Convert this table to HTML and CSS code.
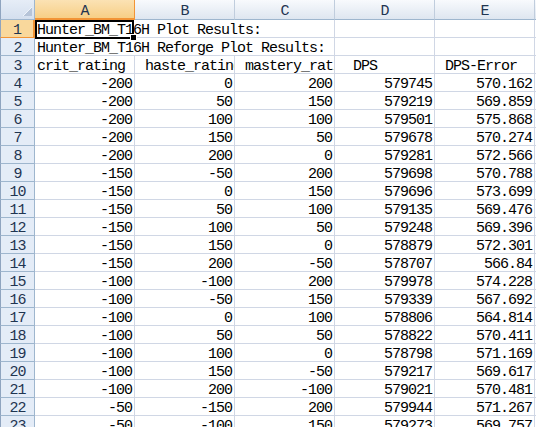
FILE: index.html
```html
<!DOCTYPE html>
<html>
<head>
<meta charset="utf-8">
<link rel="stylesheet" href="styles.css">
</head>
<body>
<div class="sheet">
  <div class="row hdr">
    <div class="corner"><svg width="34" height="19" viewBox="0 0 34 19"><polygon points="31,7 31,16 22,16" fill="#b6c4d8"/><polyline points="31,7 22,16" stroke="#eef3fa" stroke-width="1" fill="none"/></svg></div>
    <div class="ch sel">A</div><div class="ch">B</div><div class="ch">C</div><div class="ch">D</div><div class="ch">E</div><div class="ch"></div>
  </div>
  <div class="row"><div class="rh sel">1</div><div class="c span3">Hunter_BM_T16H Plot Results:</div><div class="c"></div><div class="c"></div><div class="c"></div></div>
  <div class="row"><div class="rh">2</div><div class="c span3">Hunter_BM_T16H Reforge Plot Results:</div><div class="c"></div><div class="c"></div><div class="c"></div></div>
  <div class="row"><div class="rh">3</div><div class="c">crit_rating</div><div class="c"> haste_rating</div><div class="c"> mastery_rating</div><div class="c">  DPS</div><div class="c"> DPS-Error</div><div class="c"></div></div>
  <div class="row"><div class="rh">4</div><div class="c n">-200</div><div class="c n">0</div><div class="c n">200</div><div class="c n">579745</div><div class="c n">570.162</div><div class="c"></div></div>
  <div class="row"><div class="rh">5</div><div class="c n">-200</div><div class="c n">50</div><div class="c n">150</div><div class="c n">579219</div><div class="c n">569.859</div><div class="c"></div></div>
  <div class="row"><div class="rh">6</div><div class="c n">-200</div><div class="c n">100</div><div class="c n">100</div><div class="c n">579501</div><div class="c n">575.868</div><div class="c"></div></div>
  <div class="row"><div class="rh">7</div><div class="c n">-200</div><div class="c n">150</div><div class="c n">50</div><div class="c n">579678</div><div class="c n">570.274</div><div class="c"></div></div>
  <div class="row"><div class="rh">8</div><div class="c n">-200</div><div class="c n">200</div><div class="c n">0</div><div class="c n">579281</div><div class="c n">572.566</div><div class="c"></div></div>
  <div class="row"><div class="rh">9</div><div class="c n">-150</div><div class="c n">-50</div><div class="c n">200</div><div class="c n">579698</div><div class="c n">570.788</div><div class="c"></div></div>
  <div class="row"><div class="rh">10</div><div class="c n">-150</div><div class="c n">0</div><div class="c n">150</div><div class="c n">579696</div><div class="c n">573.699</div><div class="c"></div></div>
  <div class="row"><div class="rh">11</div><div class="c n">-150</div><div class="c n">50</div><div class="c n">100</div><div class="c n">579135</div><div class="c n">569.476</div><div class="c"></div></div>
  <div class="row"><div class="rh">12</div><div class="c n">-150</div><div class="c n">100</div><div class="c n">50</div><div class="c n">579248</div><div class="c n">569.396</div><div class="c"></div></div>
  <div class="row"><div class="rh">13</div><div class="c n">-150</div><div class="c n">150</div><div class="c n">0</div><div class="c n">578879</div><div class="c n">572.301</div><div class="c"></div></div>
  <div class="row"><div class="rh">14</div><div class="c n">-150</div><div class="c n">200</div><div class="c n">-50</div><div class="c n">578707</div><div class="c n">566.84</div><div class="c"></div></div>
  <div class="row"><div class="rh">15</div><div class="c n">-100</div><div class="c n">-100</div><div class="c n">200</div><div class="c n">579978</div><div class="c n">574.228</div><div class="c"></div></div>
  <div class="row"><div class="rh">16</div><div class="c n">-100</div><div class="c n">-50</div><div class="c n">150</div><div class="c n">579339</div><div class="c n">567.692</div><div class="c"></div></div>
  <div class="row"><div class="rh">17</div><div class="c n">-100</div><div class="c n">0</div><div class="c n">100</div><div class="c n">578806</div><div class="c n">564.814</div><div class="c"></div></div>
  <div class="row"><div class="rh">18</div><div class="c n">-100</div><div class="c n">50</div><div class="c n">50</div><div class="c n">578822</div><div class="c n">570.411</div><div class="c"></div></div>
  <div class="row"><div class="rh">19</div><div class="c n">-100</div><div class="c n">100</div><div class="c n">0</div><div class="c n">578798</div><div class="c n">571.169</div><div class="c"></div></div>
  <div class="row"><div class="rh">20</div><div class="c n">-100</div><div class="c n">150</div><div class="c n">-50</div><div class="c n">579217</div><div class="c n">569.617</div><div class="c"></div></div>
  <div class="row"><div class="rh">21</div><div class="c n">-100</div><div class="c n">200</div><div class="c n">-100</div><div class="c n">579021</div><div class="c n">570.481</div><div class="c"></div></div>
  <div class="row"><div class="rh">22</div><div class="c n">-50</div><div class="c n">-150</div><div class="c n">200</div><div class="c n">579944</div><div class="c n">571.267</div><div class="c"></div></div>
  <div class="row"><div class="rh">23</div><div class="c n">-50</div><div class="c n">-100</div><div class="c n">150</div><div class="c n">579273</div><div class="c n">569.757</div><div class="c"></div></div>
  <div class="selbox"></div>
  <div class="handle"></div>
</div>
</body>
</html>
```
FILE: styles.css
```css
html, body {
  margin: 0;
  padding: 0;
  background: #fff;
  overflow: hidden;
}
.sheet {
  position: relative;
  width: 636px;
  font-family: "Liberation Mono", monospace;
  font-size: 15px;
  letter-spacing: -1px;
  color: #000;
}
.row {
  display: grid;
  grid-template-columns: 35px repeat(6, 100px);
  grid-template-rows: 18px;
}
.row.hdr {
  grid-template-rows: 20px;
}
.c {
  box-sizing: border-box;
  border-right: 1px solid #d0d7e5;
  border-bottom: 1px solid #d0d7e5;
  padding: 0 2px;
  line-height: 22px;
  white-space: pre;
  overflow: hidden;
}
.c.n {
  text-align: right;
}
.span3 {
  grid-column: span 3;
}
.rh {
  box-sizing: border-box;
  background: #e4ecf7;
  border-left: 1px solid #8fa4bf;
  border-right: 1px solid #9eb6ce;
  border-bottom: 1px solid #9eb6ce;
  text-align: center;
  color: #1f3551;
  line-height: 22px;
  overflow: hidden;
}
.rh.sel {
  background: #f9d89c;
  border-right: 2px solid #f29436;
  border-bottom: 1px solid #f29436;
}
.corner {
  box-sizing: border-box;
  background: linear-gradient(#e6edf7, #d4dfee);
  border-left: 1px solid #8fa4bf;
  border-right: 1px solid #9eb6ce;
  border-bottom: 1px solid #9eb6ce;
  overflow: hidden;
}
.corner svg {
  display: block;
}
.ch {
  box-sizing: border-box;
  background: linear-gradient(#f8fafd, #dee6f0);
  border-right: 1px solid #c0cddd;
  border-bottom: 1px solid #9eb6ce;
  text-align: center;
  color: #1f3551;
  line-height: 24px;
  overflow: hidden;
}
.ch.sel {
  background: linear-gradient(#fbe2b4, #f7cf86);
  border-right: 1px solid #f29436;
  border-bottom: 2px solid #f29436;
}
.selbox {
  position: absolute;
  left: 35px;
  top: 20px;
  width: 99px;
  height: 19px;
  box-sizing: border-box;
  border: 2px solid #000;
}
.handle {
  position: absolute;
  left: 130px;
  top: 34px;
  width: 7px;
  height: 7px;
  box-sizing: border-box;
  background: #000;
  border: 1px solid #fff;
}
```
